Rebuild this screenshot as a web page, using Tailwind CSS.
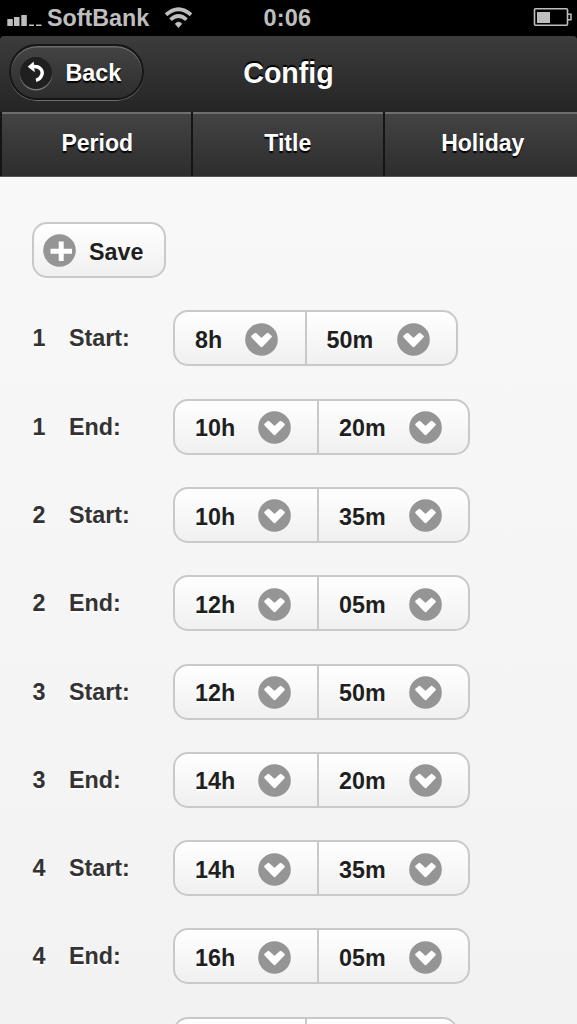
<!DOCTYPE html>
<html lang="en">
<head>
    <meta charset="UTF-8">
    <meta name="viewport" content="width=device-width, initial-scale=1.0">
    <title>Config</title>
    <script src="https://cdn.jsdelivr.net/npm/@tailwindcss/browser@4"></script>
</head>
<body class="h-[1024px] overflow-hidden bg-black font-['Liberation_Sans',Helvetica,sans-serif] font-bold text-[23.3px]">
    <!-- Status bar -->
    <div class="h-9 grid grid-cols-[1fr_50px_1fr] items-center text-[#bebebe] pl-[7px] pr-[7px]">
        <div class="flex items-center">
            <svg class="w-[35px] h-[36px] shrink-0" viewBox="0 0 35 36" fill="currentColor">
                <rect x="0.300" y="19" width="5.500" height="7"/>
                <rect x="7" y="17" width="5.500" height="9"/>
                <rect x="14.300" y="15" width="5.500" height="11"/>
                <rect x="22" y="24.500" width="5" height="1.500"/>
                <rect x="29" y="24.500" width="5.500" height="1.500"/>
            </svg>
            <span class="ml-[5px] leading-9">SoftBank</span>
            <svg class="w-[29px] h-[36px] ml-[15px] shrink-0" viewBox="0 0 29 36" fill="none" stroke="currentColor" stroke-width="3.800">
                <path d="M2 14.700Q14.500 3.700 27 14.700"/>
                <path d="M6.500 19.700Q14.500 12.400 22.500 19.700"/>
                <path d="M10.800 23.700Q14.500 20 18.200 23.700L14.500 28Z" fill="currentColor" stroke="none"/>
            </svg>
        </div>
        <span class="text-[23.5px] leading-9 tracking-[0.2px]">0:06</span>
        <div class="flex justify-end -mr-[2px]">
            <svg class="w-[39px] h-[36px]" viewBox="0 0 39 36" fill="none" stroke="currentColor">
                <rect x="1.500" y="8.800" width="33" height="16.400" rx="1" stroke-width="1.600"/>
                <path d="M35 14.300h3v5.400h-3" stroke-width="1.500"/>
                <rect x="4" y="12" width="13" height="11" fill="currentColor" stroke="none"/>
            </svg>
        </div>
    </div>

    <!-- Header -->
    <header class="h-[76px] grid grid-cols-[1fr_auto_1fr] items-start rounded-t-[4px] bg-linear-to-b from-[#3c3c3c] to-[#252525] text-white [text-shadow:0_-2px_1px_#000]">
        <button class="ml-[9px] mt-[8px] w-[135px] h-[56px] flex items-center rounded-full border-2 border-[#161616] bg-linear-to-b from-[#444] to-[#2d2d2d] pl-[9px] shadow-[0_1px_0_#6c6c6c,inset_0_1.500px_0_#6c6c6c] [text-shadow:0_2px_1px_#000]">
            <span class="w-8 h-8 rounded-full bg-[#1f1f1f] shadow-[0_1.500px_0_#777] mt-[1px]">
                <svg class="w-8 h-8" viewBox="0 0 32 32" fill="none" stroke="#fff" stroke-width="3.400">
                    <path d="M11 9.500H14.500C20.500 9.500 23.300 14 21.800 18Q20.300 22.300 16 23.300"/>
                    <path d="M7.700 9.800L13.800 4.500V8L14.800 15.200Z" fill="#fff" stroke="none"/>
                </svg>
            </span>
            <span class="ml-[13.500px] mt-[1px] leading-7">Back</span>
        </button>
        <h1 class="text-[28.6px] leading-[36px] mt-[19px]">Config</h1>
    </header>

    <!-- Tabs -->
    <nav class="h-[65px] grid grid-cols-[189.500px_189.500px_1fr] gap-x-[2px] pl-[1.500px] border-b border-[#555] bg-[#141414] text-white text-center text-[23px] leading-[62px] [text-shadow:0_2px_1px_#000]">
        <a class="bg-linear-to-b from-[#444] to-[#2d2d2d] shadow-[inset_0_2px_0_#6e6e6e] pl-[2px]">Period</a>
        <a class="bg-linear-to-b from-[#444] to-[#2d2d2d] shadow-[inset_0_2px_0_#6e6e6e]">Title</a>
        <a class="bg-linear-to-b from-[#444] to-[#2d2d2d] shadow-[inset_0_2px_0_#6e6e6e] pl-[4px]">Holiday</a>
    </nav>

    <!-- Content -->
    <main class="h-[847px] overflow-hidden bg-linear-to-b from-[#f8f8f8] to-[#f2f2f2] text-[#333] pt-[45px] pl-8 [text-shadow:0_2px_0_#fff]">
        <button class="w-[134px] h-[56px] flex items-center rounded-[15px] border-2 border-[#c9c9c9] bg-linear-to-b from-white to-[#f0f0f0] text-[#1f1f1f] pl-[9px]">
            <svg class="w-[33px] h-[33px] mt-px" viewBox="0 0 33 33">
                <circle cx="16.500" cy="16.500" r="16.300" fill="#959595"/>
                <path d="M18.200 7.500v19.500M7.500 17.200h21.500" stroke="#fff" stroke-width="5"/>
            </svg>
            <span class="ml-[13px] mt-[4px]">Save</span>
        </button>
        <div id="periods" class="mt-[32.400px]"></div>
    </main>

    <script>
        const periods = [
            ['1', 'Start:', '8h', '50m'],
            ['1', 'End:', '10h', '20m'],
            ['2', 'Start:', '10h', '35m'],
            ['2', 'End:', '12h', '05m'],
            ['3', 'Start:', '12h', '50m'],
            ['3', 'End:', '14h', '20m'],
            ['4', 'Start:', '14h', '35m'],
            ['4', 'End:', '16h', '05m'],
            ['', '', '', '']
        ];

        const arrow = `
            <svg class="w-[33px] h-[33px] mt-[2px] shrink-0" viewBox="0 0 33 33">
                <circle cx="16.500" cy="16.500" r="16.300" fill="#959595"/>
                <path d="M7.600 13.600L10.400 11.200L16.500 16.800L22.600 11.200L25.400 13.600L16.500 22.800Z" fill="#fff" stroke="#fff" stroke-width="2.800" stroke-linejoin="round"/>
            </svg>`;

        document.getElementById('periods').innerHTML = periods.map(([no, label, hour, minute]) => `
            <div class="h-[88.300px] flex items-start">
                <span class="w-[37px] mt-[11px] pl-[0.600px] leading-[34px]">${no}</span>
                <span class="w-[104px] mt-[11px] leading-[34px]">${label}</span>
                <div class="h-[56px] flex rounded-[15px] border-2 border-[#c9c9c9] bg-linear-to-b from-white to-[#f0f0f0] text-[#1f1f1f]">
                    <div class="flex items-center pl-[20px] pr-[26.500px] border-r-2 border-[#c9c9c9]">
                        <span class="mt-[4px] mr-[23px] ${hour.length > 2 ? 'w-[39.500px]' : 'w-[27px]'}">${hour}</span>${arrow}
                    </div>
                    <div class="flex items-center pl-[20px] pr-[26px]">
                        <span class="mt-[4px] mr-[23px] w-[47px]">${minute}</span>${arrow}
                    </div>
                </div>
            </div>
        `).join('');
    </script>
</body>
</html>
